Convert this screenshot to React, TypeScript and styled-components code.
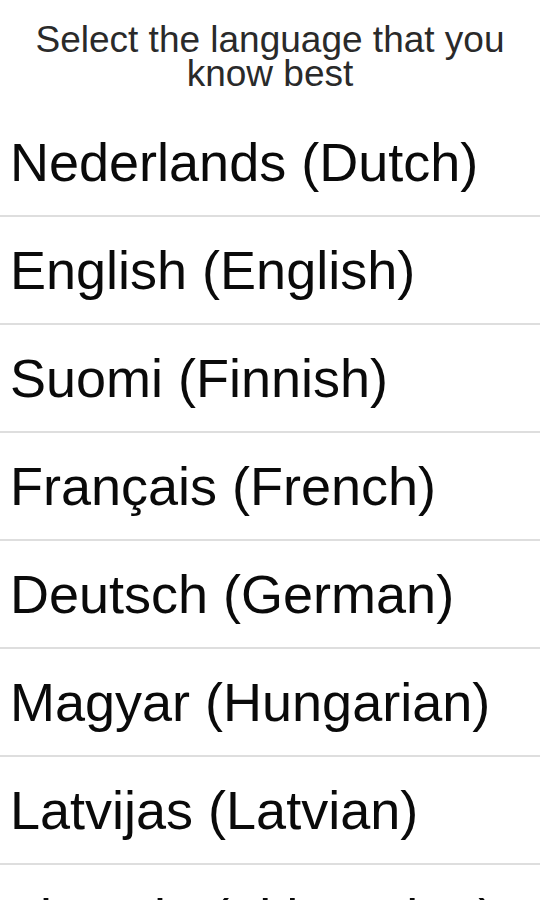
import { FC } from "react"
import styled, { createGlobalStyle } from "styled-components"

const languages = [
    "Nederlands (Dutch)",
    "English (English)",
    "Suomi (Finnish)",
    "Français (French)",
    "Deutsch (German)",
    "Magyar (Hungarian)",
    "Latvijas (Latvian)",
    "Lietuvių (Lithuanian)",
    "Polski (Polish)",
    "Português (Portuguese)",
];

const GlobalStyle = createGlobalStyle`
    html, body {
        margin: 0;
        padding: 0;
        background: #fff;
        font-family: "Liberation Sans", Arial, sans-serif;
    }
`;

const App: FC = () => {
    return (
        <>
            <GlobalStyle />
            <Page>
                <Title>Select the language that you know best</Title>
                <List>
                    {languages.map((lang) => (
                        <Row key={lang}>{lang}</Row>
                    ))}
                </List>
            </Page>
        </>
    )
};

export default App;

const Page = styled.div`
    width: 540px;
    height: 900px;
    overflow: hidden;
    display: flex;
    flex-direction: column;
`;

const Title = styled.h1`
    margin: 0;
    padding: 23px 30px 18px;
    font-size: 37px;
    font-weight: 400;
    line-height: 34px;
    color: #2a2a2a;
    text-align: center;
`;

const List = styled.ul`
    list-style: none;
    margin: 0;
    padding: 0;
`;

const Row = styled.li`
    display: flex;
    align-items: center;
    height: 106px;
    padding: 0 10px;
    border-bottom: 2px solid #dedede;
    font-size: 54px;
    color: #0a0a0a;
    white-space: nowrap;
`;
